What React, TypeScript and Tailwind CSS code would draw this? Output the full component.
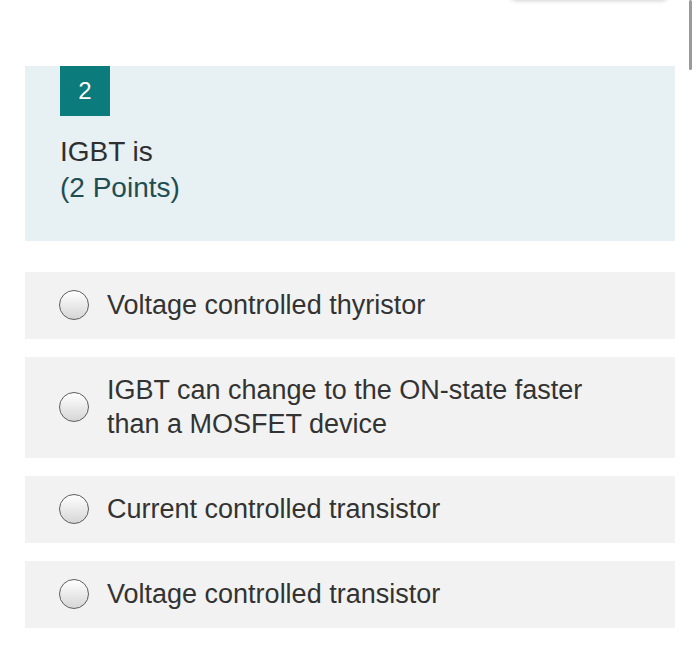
import React from "react"

const options = [
  "Voltage controlled thyristor",
  "IGBT can change to the ON-state faster than a MOSFET device",
  "Current controlled transistor",
  "Voltage controlled transistor",
]

function Radio() {
  return (
    <span className="shrink-0 w-[30px] h-[30px] rounded-full border-[1.5px] border-[#5e5e5e] bg-gradient-to-b from-white to-[#d6d6d6]" />
  )
}

export default function App() {
  return (
    <div className="relative w-[700px] h-[652px] bg-white overflow-hidden font-['Liberation_Sans',Arial,sans-serif]">
      {/* floating bar shadow at the top + scrollbar */}
      <div className="absolute left-[510px] top-[-40px] w-[158px] h-[40px] rounded-b-md bg-white shadow-[0_1px_4px_rgba(0,0,0,0.18)]" />
      <div className="absolute left-[689px] top-0 w-[3px] h-[70px] rounded-full bg-[#9a9a9a]" />

      <div className="flex flex-col pt-[66px] pl-[25px] w-[675px]">
        <div className="bg-[#e7f0f2] pl-[35px] pb-[35px]">
          <div className="w-[50px] h-[50px] bg-[#0b7b7b] text-white text-[24px] flex items-center justify-center">
            2
          </div>
          <div className="mt-[18px] text-[28px] leading-[36px]">
            <div className="text-[#2f2f2f]">IGBT is</div>
            <div className="text-[#1f4e52]">(2 Points)</div>
          </div>
        </div>

        <div className="flex flex-col gap-[18px] mt-[31px]">
          {options.map(o => (
            <div key={o} className="bg-[#f2f2f2] flex items-center gap-[18px] pl-[34px] pr-[60px] pt-4 pb-[17px]">
              <Radio />
              <span className="text-[27px] leading-[34px] text-[#333333]">{o}</span>
            </div>
          ))}
        </div>
      </div>
    </div>
  )
}
